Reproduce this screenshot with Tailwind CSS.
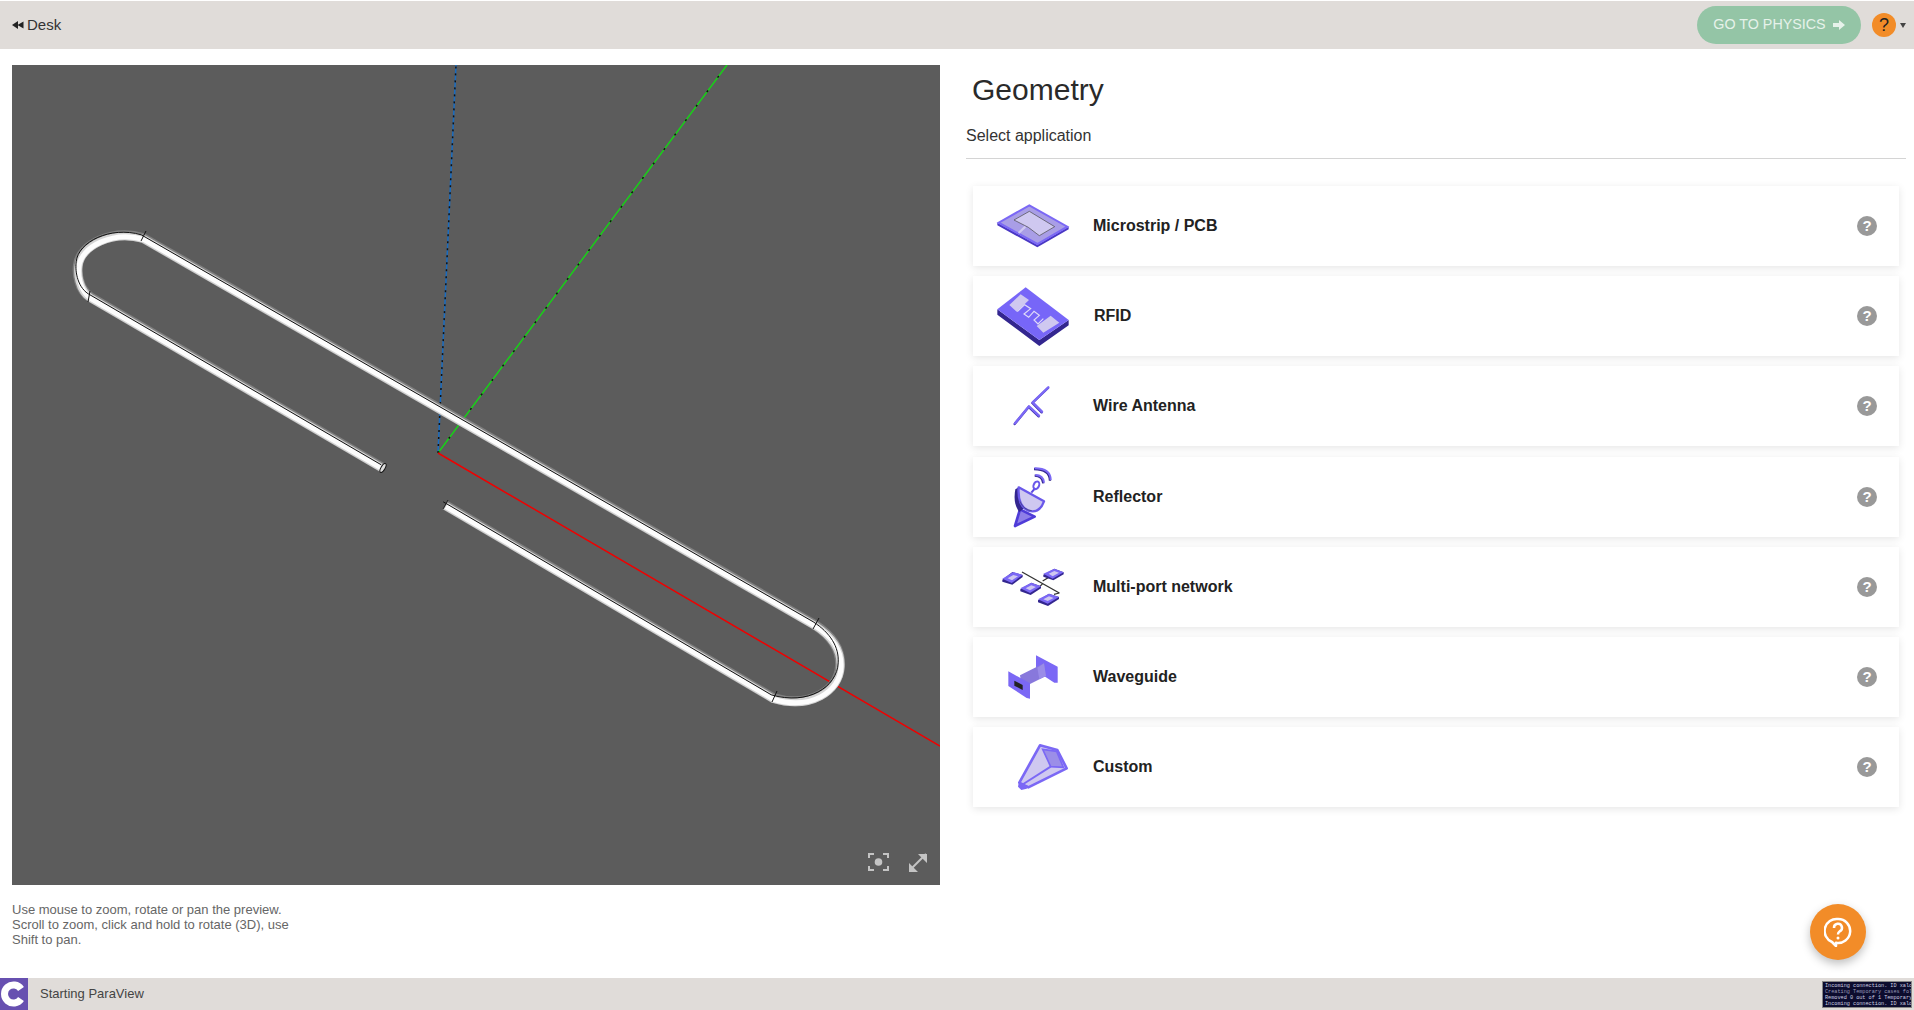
<!DOCTYPE html>
<html><head><meta charset="utf-8"><script src="https://cdn.jsdelivr.net/npm/@tailwindcss/browser@4"></script></head>
<body class="bg-white">
<div class="flex flex-col h-[1010px] w-[1914px] overflow-hidden font-['Liberation_Sans',Arial,sans-serif] text-[#222]">
  <header class="mt-px h-[48px] bg-[#e0dcd9] flex items-center shrink-0 relative">
    <div class="flex items-center pl-3 text-[15px] text-[#333] gap-[3px]">
      <svg width="12" height="10" viewBox="0 0 12 10"><path d="M0 5 L6 1 V9 Z M5.500 5 L11.500 1.500 V8.500 Z" fill="#222"/></svg>
      <span>Desk</span>
    </div>
    <div class="ml-auto flex items-center pr-[8px]">
      <button class="w-[164px] h-[38px] rounded-full bg-[#94c5a6] text-[#e6f2ea] text-[14.300px] flex items-center justify-center gap-[7px]">
        <span>GO TO PHYSICS</span>
        <svg width="12" height="12" viewBox="0 0 12 12"><path d="M0 4 H6 V1 L12 6 L6 11 V8 H0 Z" fill="#e6f2ea"/></svg>
      </button>
      <div class="ml-[11px] w-[24px] h-[24px] rounded-full bg-[#f28c28] flex items-center justify-center text-[18px] text-[#222]">?</div>
      <svg class="ml-[4px]" width="6" height="5" viewBox="0 0 6 5"><path d="M0 0 H6 L3 5 Z" fill="#444"/></svg>
    </div>
  </header>
  <main class="flex-1 flex min-h-0">
    <section class="w-[966px] shrink-0 pl-3 pt-4">
      <div class="relative w-[928px] h-[820px] bg-[#5c5c5c] overflow-hidden">
        <svg class="absolute inset-0" width="928" height="820" viewBox="12 65 928 820" fill="none">
          <path d="M438 453 L456 65" stroke="#1a6cc0" stroke-width="1.500"/>
          <path d="M438 453 L456 65" stroke="#111" stroke-width="1.500" stroke-dasharray="2 5"/>
          <path d="M438 453 L727 65" stroke="#18d018" stroke-width="1.500"/>
          <path d="M438 453 L727 65" stroke="#111" stroke-width="1.500" stroke-dasharray="2 16"/>
          <path d="M438 453 L940 746" stroke="#f00000" stroke-width="1.500"/>
          <g stroke-linecap="butt" stroke-linejoin="round">
            <path d="M383 468 L90 297 C78 289 77 272 78 265 C80 245 112 229 143 238 L815 625 C832 636 841 650 840 666 C839 690 810 709 773 698 L445 505" stroke="#808080" stroke-width="10"/>
            <path d="M383 468 L90 297 C78 289 77 272 78 265 C80 245 112 229 143 238 L815 625 C832 636 841 650 840 666 C839 690 810 709 773 698 L445 505" stroke="#d4d4d4" stroke-width="8" transform="translate(0.500 1)"/>
            <path d="M383 468 L90 297 C78 289 77 272 78 265 C80 245 112 229 143 238 L815 625 C832 636 841 650 840 666 C839 690 810 709 773 698 L445 505" stroke="#fdfdfd" stroke-width="5" transform="translate(1 1.500)"/>
            <path d="M383 468 L90 297 C78 289 77 272 78 265 C80 245 112 229 143 238 L815 625 C832 636 841 650 840 666 C839 690 810 709 773 698 L445 505" stroke="#111" stroke-width="1" transform="translate(-1.800 -3.200)"/>
          </g>
          <path d="M146 231 L141 241 M90 291 L88 302 M819 618 L813 629 M777 691 L772 702" stroke="#111" stroke-width="1"/>
          <ellipse cx="383" cy="468" rx="2" ry="5" transform="rotate(30 383 468)" stroke="#111" fill="#ddd" stroke-width="1"/>
          <path d="M448 500 L443 509" stroke="#222" stroke-width="1"/>
        </svg>
        <svg class="absolute inset-0" width="928" height="820" viewBox="12 65 928 820" fill="none">
          <g stroke="#c4c4c4" stroke-width="2"><path d="M869 858 V854 H874 M883 854 H888 V858 M888 866 V870 H883 M874 870 H869 V866"/></g>
          <circle cx="878.500" cy="862" r="3.800" fill="#c4c4c4"/>
          <path d="M910 870 L926 854" stroke="#c4c4c4" stroke-width="2"/>
          <path d="M909 863 V872 H918 Z M918 854 H927 V863 Z" fill="#c4c4c4"/>
        </svg>
      </div>
      <p class="w-[295px] mt-[17px] text-[13px] leading-[15px] text-[#666]">Use mouse to zoom, rotate or pan the preview. Scroll to zoom, click and hold to rotate (3D), use Shift to pan.</p>
    </section>
    <section class="flex-1 pr-2 min-w-0">
      <h1 class="pl-[6px] pt-[21px] h-[53px] text-[30px] leading-[40px] font-normal text-[#2a2a2a]">Geometry</h1>
      <div class="h-[57px] pt-[24px] text-[16px] leading-[20px] text-[#333] border-b border-[#d4d4d4]">Select application</div>
      <div class="pl-[7px] pr-[7px] pt-[27px] flex flex-col gap-[10.200px]">

        <div class="h-[80px] bg-white shadow-[0_2px_8px_rgba(0,0,0,0.10)] flex items-center pr-[22px]">
          <svg width="100" height="80" viewBox="39 48 300 240" class="shrink-0">
            <path d="M112 158 L232 224 L326 170 V178 L232 232 L112 166 Z" fill="#4a38c4"/>
            <path d="M208 106 L322 170 L232 222 L116 158 Z" fill="#a99ee6" stroke="#7b68f5" stroke-width="6"/>
            <path d="M162 150 L208 124 L284 170 L238 197 L205 172 Z" fill="#cfc8f0" stroke="#444" stroke-width="2"/>
            <path d="M196 170 L176 189" stroke="#cfc8f0" stroke-width="7"/>
          </svg>
          <span class="ml-[20px] font-bold text-[16px] text-[#222]">Microstrip / PCB</span>
          <span class="ml-auto w-[20px] h-[20px] rounded-full bg-[#999] text-white font-bold text-[15px] leading-[20px] text-center">?</span>
        </div>

        <div class="h-[80px] bg-white shadow-[0_2px_8px_rgba(0,0,0,0.10)] flex items-center pr-[22px]">
          <svg width="100" height="80" viewBox="39 318 300 240" class="shrink-0">
            <path d="M112 418 L238 510 L326 450 V466 L238 528 L112 434 Z" fill="#33268f"/>
            <path d="M197 352 L326 450 L238 510 L112 418 Z" fill="#7766f8"/>
            <path d="M182 373 L207 390 L170 425 L148 405 Z M272 437 L298 458 L250 488 L230 468 Z" fill="#cfc8f0"/>
            <path d="M172 425 L194 404 L212 416 L192 432 L206 442 L222 424 L238 436 L222 450 L234 462 L250 446" fill="none" stroke="#e0dbf8" stroke-width="3.500"/>
          </svg>
          <span class="ml-[21px] font-bold text-[16px] text-[#222]">RFID</span>
          <span class="ml-auto w-[20px] h-[20px] rounded-full bg-[#999] text-white font-bold text-[15px] leading-[20px] text-center">?</span>
        </div>

        <div class="h-[80px] bg-white shadow-[0_2px_8px_rgba(0,0,0,0.10)] flex items-center pr-[22px]">
          <svg width="100" height="80" viewBox="39 21 300 240" class="shrink-0" fill="none" stroke-linecap="round">
            <g stroke="#3f2fb0" stroke-width="7" transform="translate(-1 2)"><path d="M265 85 L218 130 M218 130 L246 158 M207 142 L237 170 M207 142 L165 193"/></g>
            <g stroke="#7b68f5" stroke-width="7"><path d="M265 85 L218 130 M218 130 L246 158 M207 142 L237 170 M207 142 L165 193"/></g>
          </svg>
          <span class="ml-[20px] font-bold text-[16px] text-[#222]">Wire Antenna</span>
          <span class="ml-auto w-[20px] h-[20px] rounded-full bg-[#999] text-white font-bold text-[15px] leading-[20px] text-center">?</span>
        </div>

        <div class="h-[80px] bg-white shadow-[0_2px_8px_rgba(0,0,0,0.10)] flex items-center pr-[22px]">
          <svg width="100" height="80" viewBox="39 291 300 240" class="shrink-0" fill="none">
            <path d="M180 448 L224 470 L165 498 Z" fill="#8f7fe8" stroke="#4f3cd8" stroke-width="8" stroke-linejoin="round"/>
            <path d="M166 388 Q158 430 178 456 L192 445 L176 382 Z" fill="#33268f"/>
            <path d="M176 382 L252 424 Q238 462 205 452 Q172 438 176 382 Z" fill="#cfc8f0" stroke="#6a58ea" stroke-width="7" stroke-linejoin="round"/>
            <path d="M180 424 Q190 450 215 452" stroke="#3d3d6a" stroke-width="2"/>
            <path d="M214 398 L226 384" stroke="#5b48e0" stroke-width="6"/>
            <ellipse cx="229" cy="376" rx="8" ry="12" transform="rotate(25 229 376)" stroke="#6a58ea" stroke-width="6"/>
            <path d="M226 345 Q250 345 252 368" stroke="#33268f" stroke-width="7" transform="translate(-2 2)"/>
            <path d="M226 345 Q250 345 252 368" stroke="#7b68f5" stroke-width="6"/>
            <path d="M224 325 Q272 325 272 360" stroke="#33268f" stroke-width="7" transform="translate(-2 2)"/>
            <path d="M224 325 Q272 325 272 360" stroke="#7b68f5" stroke-width="6"/>
          </svg>
          <span class="ml-[20px] font-bold text-[16px] text-[#222]">Reflector</span>
          <span class="ml-auto w-[20px] h-[20px] rounded-full bg-[#999] text-white font-bold text-[15px] leading-[20px] text-center">?</span>
        </div>

        <div class="h-[80px] bg-white shadow-[0_2px_8px_rgba(0,0,0,0.10)] flex items-center pr-[22px]">
          <svg width="100" height="80" viewBox="39 -10 300 240" class="shrink-0" fill="none">
            <path d="M186 65 L298 128 M248 92 L278 74" stroke="#333" stroke-width="4"/>
            <path d="M232 116 L248 100 M282 132 L298 128" stroke="#333" stroke-width="3.500"/>
            <path d="M127 88 L157 65 L188 74 L188 80 L157 103 L127 94 Z" fill="#33268f"/><path d="M127 85 L160 65 L188 74 L155 98 Z" fill="#7b68f5"/><path d="M143 84 L160 74 L174 78 L156 90 Z" fill="#cfc8f0"/>
            <path d="M250 73 L283 55 L311 66 L311 72 L280 90 L250 79 Z" fill="#33268f"/><path d="M250 70 L283 55 L311 66 L278 85 Z" fill="#7b68f5"/><path d="M266 70 L283 62 L297 67 L278 78 Z" fill="#cfc8f0"/>
            <path d="M181 117 L214 97 L243 108 L243 114 L212 134 L181 123 Z" fill="#33268f"/><path d="M181 114 L214 97 L243 108 L210 128 Z" fill="#7b68f5"/><path d="M197 114 L214 105 L228 110 L210 120 Z" fill="#cfc8f0"/>
            <path d="M234 150 L267 130 L297 140 L297 146 L264 167 L234 156 Z" fill="#33268f"/><path d="M234 147 L267 130 L297 140 L263 160 Z" fill="#7b68f5"/><path d="M250 147 L267 138 L281 143 L263 152 Z" fill="#cfc8f0"/>
          </svg>
          <span class="ml-[20px] font-bold text-[16px] text-[#222]">Multi-port network</span>
          <span class="ml-auto w-[20px] h-[20px] rounded-full bg-[#999] text-white font-bold text-[15px] leading-[20px] text-center">?</span>
        </div>

        <div class="h-[80px] bg-white shadow-[0_2px_8px_rgba(0,0,0,0.10)] flex items-center pr-[22px]">
          <svg width="100" height="80" viewBox="39 261 300 240" class="shrink-0">
            <path d="M228 316 L293 350 V398 L283 398 L228 362 Z" fill="#7b68f5"/>
            <path d="M180 376 L252 340 L258 378 L186 414 Z" fill="#8878dc"/>
            <path d="M232 353 L252 340 L258 378 L238 388 Z" fill="#9a8ce8"/>
            <path d="M145 364 L210 400 V446 L200 444 L145 408 Z" fill="#7b68f5"/>
            <path d="M163 392 L188 405 V420 L163 407 Z" fill="#222"/>
          </svg>
          <span class="ml-[20px] font-bold text-[16px] text-[#222]">Waveguide</span>
          <span class="ml-auto w-[20px] h-[20px] rounded-full bg-[#999] text-white font-bold text-[15px] leading-[20px] text-center">?</span>
        </div>

        <div class="h-[80px] bg-white shadow-[0_2px_8px_rgba(0,0,0,0.10)] flex items-center pr-[22px]">
          <svg width="100" height="80" viewBox="39 531 300 240" class="shrink-0">
            <path d="M178 698 L240 586 L292 600 L320 655 L205 712 Z" fill="#cfc8f0" stroke="#7b68f5" stroke-width="8" stroke-linejoin="round"/>
            <path d="M248 598 L290 604 L310 652 L272 650 Z" fill="#9b8ee8" stroke="#7b68f5" stroke-width="5"/>
            <path d="M176 698 L205 708 L200 716 L184 720 L174 710 Z" fill="#7b68f5"/>
            <path d="M190 702 L272 650" stroke="#7b68f5" stroke-width="6"/>
          </svg>
          <span class="ml-[20px] font-bold text-[16px] text-[#222]">Custom</span>
          <span class="ml-auto w-[20px] h-[20px] rounded-full bg-[#999] text-white font-bold text-[15px] leading-[20px] text-center">?</span>
        </div>
      </div>
    </section>
  </main>
  <footer class="h-[32px] shrink-0 bg-[#e0dcd9] flex items-center relative">
    <svg width="28" height="32" viewBox="0 0 28 32" class="shrink-0">
      <rect width="28" height="32" fill="#6750b0"/>
      <path d="M21 11 A9 9 0 1 0 21 21" fill="none" stroke="#fff" stroke-width="7"/>
    </svg>
    <span class="ml-[12px] text-[13px] text-[#444]">Starting ParaView</span>
    <div class="ml-auto mr-[2px] w-[90px] h-[27px] bg-[#0c0c2e] border border-[#888] overflow-hidden font-['Liberation_Mono',monospace] text-[5.200px] leading-[6px] text-[#d0d0e0] whitespace-nowrap px-[2px] flex flex-col justify-end">
      <div>Incoming connection. ID xalc</div><div class="text-[#9a9ab8]">Creating Temporary cases fol</div><div>Removed 0 out of 1 Temporary</div><div>Incoming connection. ID xalo</div>
    </div>
  </footer>
  <button class="absolute left-[1810px] top-[904px] w-[56px] h-[56px] rounded-full bg-[#f28c28] shadow-[0_4px_10px_rgba(0,0,0,0.25)] flex items-center justify-center">
    <svg width="28" height="30" viewBox="0 0 28 30" fill="none">
      <path d="M14 2 A12 12 0 1 1 12 25.800 L12 29 L8 25 A12 12 0 0 1 14 2 Z" stroke="#fff" stroke-width="2.500" stroke-linejoin="round"/>
      <path d="M10 11 A4 4 0 1 1 15.500 14.500 Q14 15.500 14 17.500" stroke="#fff" stroke-width="2.500"/>
      <circle cx="14" cy="21" r="1.500" fill="#fff"/>
    </svg>
  </button>
</div>
</body></html>
